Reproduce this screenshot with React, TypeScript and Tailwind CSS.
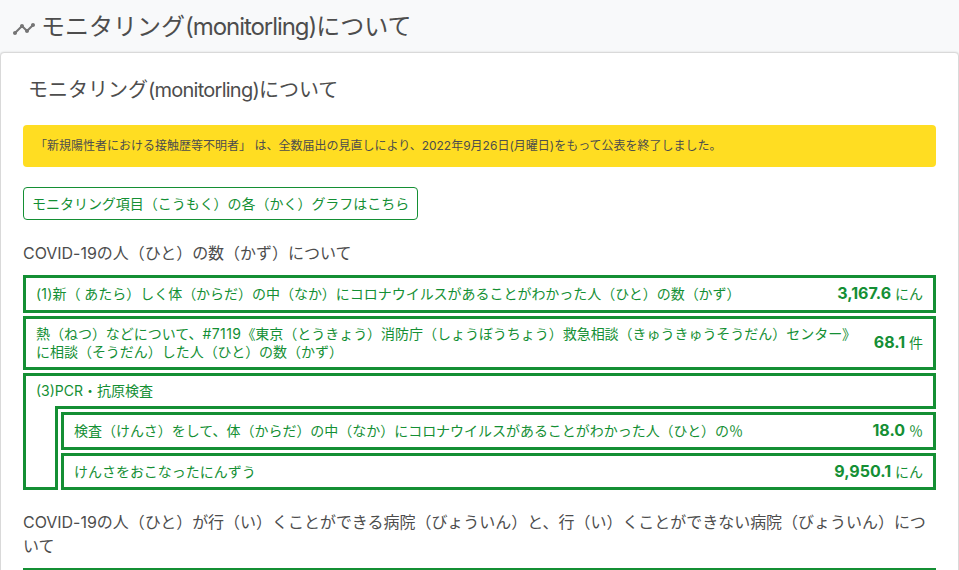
import type { ReactNode } from "react";

type RowProps = { label: ReactNode; value: string; unit: string; className?: string };

function Row({ label, value, unit, className = "" }: RowProps) {
  return (
    <div
      className={`flex items-center justify-between border-[3px] border-[#148f34] pl-[10px] pr-[10px] text-[14px] leading-[18px] text-[#148f34] ${className}`}
    >
      <span className="whitespace-nowrap tracking-[-0.03px]">{label}</span>
      <span className="whitespace-nowrap pb-px">
        <strong className="text-[16px] font-bold">{value}</strong> {unit}
      </span>
    </div>
  );
}

function TrendIcon() {
  return (
    <svg width="24" height="24" viewBox="0 0 24 24" fill="#757575">
      <path d="M23 8c0 1.1-.9 2-2 2-.18 0-.35-.02-.51-.07l-3.56 3.55c.05.16.07.34.07.52 0 1.1-.9 2-2 2s-2-.9-2-2c0-.18.02-.36.07-.52l-2.55-2.55c-.16.05-.34.07-.52.07s-.36-.02-.52-.07l-4.55 4.56c.05.16.07.33.07.51 0 1.1-.9 2-2 2s-2-.9-2-2 .9-2 2-2c.18 0 .35.02.51.07l4.56-4.55C8.02 9.36 8 9.18 8 9c0-1.1.9-2 2-2s2 .9 2 2c0 .18-.02.36-.07.52l2.55 2.55c.16-.05.34-.07.52-.07s.36.02.52.07l3.55-3.56C19.02 8.35 19 8.18 19 8c0-1.1.9-2 2-2s2 .9 2 2z" />
    </svg>
  );
}

export default function App() {
  return (
    <div className="h-[570px] w-[959px] overflow-hidden bg-[#f8f9fa] font-['Inter','Noto_Sans_CJK_JP',sans-serif] text-[#4d4d4d]">
      <header className="flex h-[52px] items-center pl-[12px]">
        <span className="mt-[6px]">
          <TrendIcon />
        </span>
        <h2 className="ml-[5px] mt-[2px] whitespace-nowrap text-[24px] leading-[36px]">
          モニタリング<span className="tracking-[-1.05px]">(monitorling)</span>について
        </h2>
      </header>

      <main className="h-[600px] rounded-[4px] border border-[#d9d9d9] bg-white px-[22px] pt-[22px] shadow-[0_0_2px_rgba(0,0,0,0.15)]">
        <h3 className="h-[30px] pl-[5px] text-[20px] leading-[30px]">
          モニタリング<span className="tracking-[-0.75px]">(monitorling)</span>について
        </h3>

        <div className="mt-[20px] flex h-[42px] items-center rounded-[4px] bg-[#ffdd22] pl-[12px] text-[12px]">
          <span>「新規陽性者における接触歴等不明者」 は、全数届出の見直しにより、2022年9月26日(月曜日)をもって公表を終了しました。</span>
        </div>

        <a className="mt-[20px] flex h-[33px] w-[395px] items-center whitespace-nowrap rounded-[4px] border border-[#148f34] pb-px pl-[8px] text-[14px] tracking-[-0.03px] text-[#148f34]">
          モニタリング項目（こうもく）の各（かく）グラフはこちら
        </a>

        <h4 className="mt-[21px] text-[16px] leading-[24px] tracking-[-0.03px]">COVID-19の人（ひと）の数（かず）について</h4>

        <div className="mt-[10px] flex flex-col gap-[3px]">
          <Row
            className="h-[38px]"
            label={
              <>
                <span className="tracking-[0.2px]">(1)</span>新（ あたら）しく体（からだ）の中（なか）にコロナウイルスがあることがわかった人（ひと）の数（かず）
              </>
            }
            value="3,167.6"
            unit="にん"
          />
          <Row
            className="h-[54px]"
            label={
              <>
                熱（ねつ）などについて、<span className="tracking-[0.4px]">#7119</span>《東京（とうきょう）消防庁（しょうぼうちょう）救急相談（きゅうきゅうそうだん）センター》
                <br />
                に相談（そうだん）した人（ひと）の数（かず）
              </>
            }
            value="68.1"
            unit="件"
          />
          <section>
            <div className="flex h-[33px] items-center border-x-[3px] border-t-[3px] border-[#148f34] pl-[10px] text-[14px] leading-[18px] text-[#148f34]">
              (3)PCR・抗原検査
            </div>
            <div className="flex h-[84px]">
              <div className="w-[32px] border-b-[3px] border-l-[3px] border-[#148f34]" />
              <div className="flex flex-1 flex-col gap-[3px] border-l-[3px] border-t-[3px] border-[#148f34] pl-[3px] pt-[3px]">
                <Row
                  className="h-[38px]"
                  label="検査（けんさ）をして、体（からだ）の中（なか）にコロナウイルスがあることがわかった人（ひと）の％"
                  value="18.0"
                  unit="％"
                />
                <Row className="h-[37px]" label="けんさをおこなったにんずう" value="9,950.1" unit="にん" />
              </div>
            </div>
          </section>
        </div>

        <h4 className="mt-[20px] text-[16px] leading-[24px] tracking-[-0.03px]">
          COVID-19の人（ひと）が行（い）くことができる病院（びょういん）と、行（い）くことができない病院（びょういん）について
        </h4>
        <div className="mt-[10px] h-[38px] border-[3px] border-[#148f34]" />
      </main>
    </div>
  );
}
